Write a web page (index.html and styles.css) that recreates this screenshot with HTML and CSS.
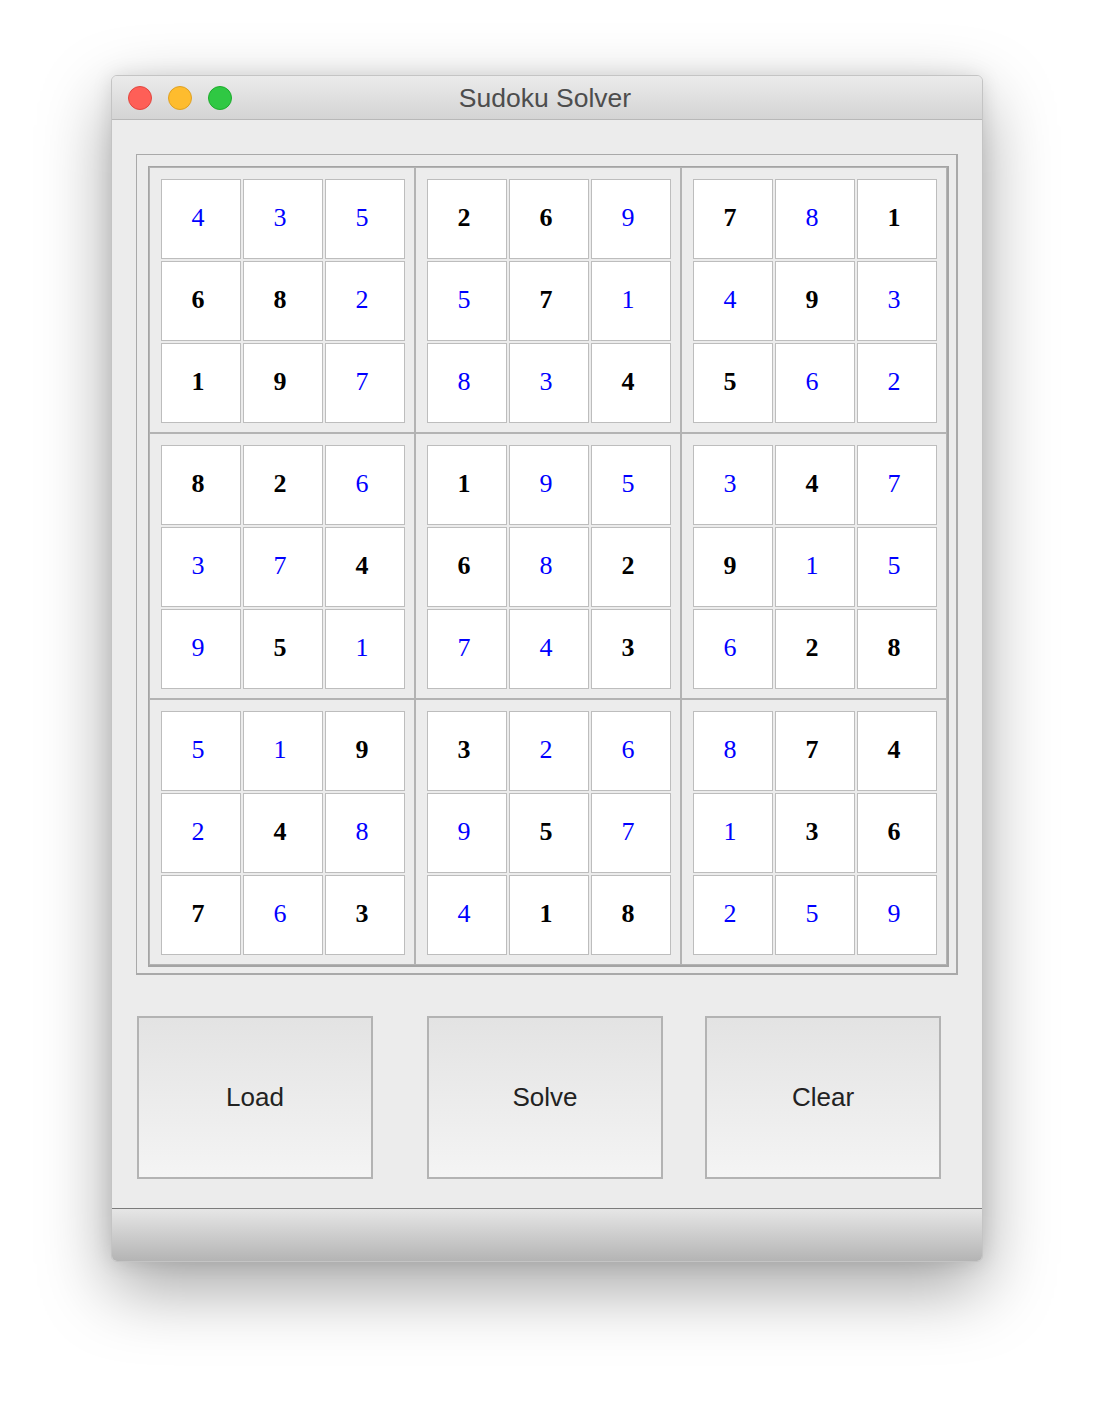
FILE: index.html
```html
<!DOCTYPE html>
<html>
<head>
<meta charset="utf-8">
<title>Sudoku Solver</title>
<link rel="stylesheet" href="styles.css">
</head>
<body>
<div class="window">
  <div class="titlebar">
    <div class="lights">
      <span class="light red"></span>
      <span class="light yellow"></span>
      <span class="light green"></span>
    </div>
    <div class="title">Sudoku Solver</div>
  </div>
  <div class="content">
    <div class="board-outer">
      <div class="board">
        <div class="block">
          <div class="c s">4</div><div class="c s">3</div><div class="c s">5</div>
          <div class="c g">6</div><div class="c g">8</div><div class="c s">2</div>
          <div class="c g">1</div><div class="c g">9</div><div class="c s">7</div>
        </div>
        <div class="block">
          <div class="c g">2</div><div class="c g">6</div><div class="c s">9</div>
          <div class="c s">5</div><div class="c g">7</div><div class="c s">1</div>
          <div class="c s">8</div><div class="c s">3</div><div class="c g">4</div>
        </div>
        <div class="block">
          <div class="c g">7</div><div class="c s">8</div><div class="c g">1</div>
          <div class="c s">4</div><div class="c g">9</div><div class="c s">3</div>
          <div class="c g">5</div><div class="c s">6</div><div class="c s">2</div>
        </div>
        <div class="block">
          <div class="c g">8</div><div class="c g">2</div><div class="c s">6</div>
          <div class="c s">3</div><div class="c s">7</div><div class="c g">4</div>
          <div class="c s">9</div><div class="c g">5</div><div class="c s">1</div>
        </div>
        <div class="block">
          <div class="c g">1</div><div class="c s">9</div><div class="c s">5</div>
          <div class="c g">6</div><div class="c s">8</div><div class="c g">2</div>
          <div class="c s">7</div><div class="c s">4</div><div class="c g">3</div>
        </div>
        <div class="block">
          <div class="c s">3</div><div class="c g">4</div><div class="c s">7</div>
          <div class="c g">9</div><div class="c s">1</div><div class="c s">5</div>
          <div class="c s">6</div><div class="c g">2</div><div class="c g">8</div>
        </div>
        <div class="block">
          <div class="c s">5</div><div class="c s">1</div><div class="c g">9</div>
          <div class="c s">2</div><div class="c g">4</div><div class="c s">8</div>
          <div class="c g">7</div><div class="c s">6</div><div class="c g">3</div>
        </div>
        <div class="block">
          <div class="c g">3</div><div class="c s">2</div><div class="c s">6</div>
          <div class="c s">9</div><div class="c g">5</div><div class="c s">7</div>
          <div class="c s">4</div><div class="c g">1</div><div class="c g">8</div>
        </div>
        <div class="block">
          <div class="c s">8</div><div class="c g">7</div><div class="c g">4</div>
          <div class="c s">1</div><div class="c g">3</div><div class="c g">6</div>
          <div class="c s">2</div><div class="c s">5</div><div class="c s">9</div>
        </div>
      </div>
    </div>
    <div class="buttons">
      <button class="btn btn-load">Load</button>
      <button class="btn btn-solve">Solve</button>
      <button class="btn btn-clear">Clear</button>
    </div>
  </div>
  <div class="bottombar"></div>
</div>
</body>
</html>
```
FILE: styles.css
```css
html, body {
  margin: 0;
  padding: 0;
  background: #ffffff;
}
body {
  width: 1094px;
  height: 1410px;
  overflow: hidden;
  font-family: "Liberation Sans", Arial, sans-serif;
}
.window {
  box-sizing: border-box;
  margin-left: 111px;
  margin-top: 75px;
  width: 872px;
  height: 1187px;
  border: 1px solid #c4c4c4;
  border-radius: 6px;
  overflow: hidden;
  background: #ececec;
  box-shadow: 0 26px 70px rgba(0, 0, 0, 0.36), 0 0 20px rgba(0, 0, 0, 0.10);
  display: flex;
  flex-direction: column;
}
.titlebar {
  height: 43px;
  flex: none;
  border-bottom: 1px solid #b8b8b8;
  background: linear-gradient(#ebebeb, #d4d4d4);
  position: relative;
  display: flex;
  align-items: center;
  justify-content: center;
}
.lights {
  position: absolute;
  left: 16px;
  top: 10px;
  display: flex;
  gap: 16px;
}
.light {
  box-sizing: border-box;
  width: 24px;
  height: 24px;
  border-radius: 50%;
  display: block;
}
.red { background: #fe5f57; border: 1px solid #e2463f; }
.yellow { background: #febc2e; border: 1px solid #dfa123; }
.green { background: #2fc843; border: 1px solid #1dac2c; }
.title {
  font-size: 26.5px;
  color: #4d4d4d;
  margin-top: 2px;
  margin-left: -4px;
}
.content {
  flex: 1;
  padding: 34px 0 0 24px;
  background: #ececec;
}
.board-outer {
  box-sizing: border-box;
  width: 822px;
  height: 821px;
  border-style: solid;
  border-color: #a9a9a9;
  border-width: 1px 2px 2px 1px;
  padding: 11px 0 0 11px;
}
.board {
  box-sizing: border-box;
  width: 801px;
  height: 801px;
  border-style: solid;
  border-color: #a4a4a4;
  border-width: 1px 2px 2px 1px;
  display: grid;
  grid-template-columns: repeat(3, 266px);
  grid-template-rows: repeat(3, 266px);
}
.block {
  box-sizing: border-box;
  border: 1px solid #b3b3b3;
  padding: 11px 0 0 11px;
  display: grid;
  grid-template-columns: repeat(3, 80px);
  grid-template-rows: repeat(3, 80px);
  gap: 2px;
}
.c {
  box-sizing: border-box;
  background: #ffffff;
  border: 1px solid #bdbdbd;
  display: flex;
  align-items: center;
  justify-content: center;
  font-family: "Liberation Serif", "Times New Roman", serif;
  font-size: 26px;
  padding-right: 6px;
  padding-bottom: 2px;
}
.g {
  color: #000000;
  font-weight: bold;
}
.s {
  color: #0000ff;
  font-weight: normal;
}
.buttons {
  display: flex;
  margin-top: 41px;
  padding-left: 1px;
}
.btn {
  box-sizing: border-box;
  width: 236px;
  height: 163px;
  border: 2px solid #b3b3b3;
  background: linear-gradient(#e3e3e3, #f4f4f4);
  font-family: "Liberation Sans", Arial, sans-serif;
  font-size: 26px;
  color: #222222;
  padding: 0;
  margin: 0;
}
.btn-solve { margin-left: 54px; }
.btn-clear { margin-left: 42px; }
.bottombar {
  height: 52px;
  flex: none;
  border-top: 1px solid #7b7b7b;
  background: linear-gradient(#e6e6e6, #b4b4b4);
}
```
